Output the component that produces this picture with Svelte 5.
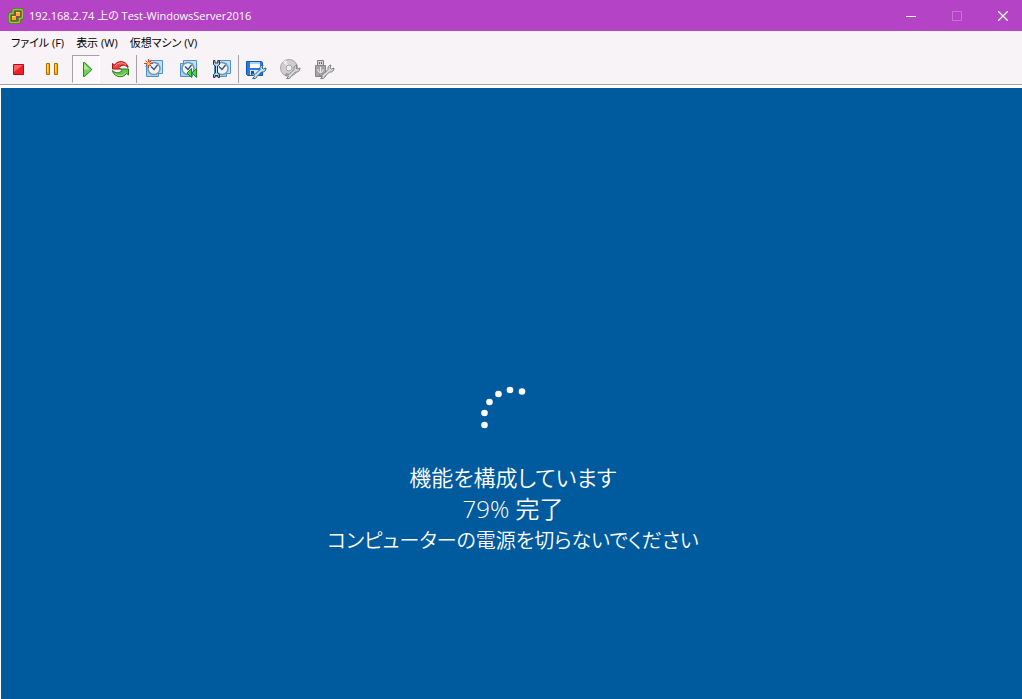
<script lang="ts">
  let progress = $state(79);

  const menus = ["ファイル (F)", "表示 (W)", "仮想マシン (V)"];

  const groups = [
    [
      { id: "stop", title: "電源オフ" },
      { id: "pause", title: "サスペンド" },
      { id: "play", title: "電源オン" },
      { id: "reset", title: "リセット" },
    ],
    [
      { id: "snapshot", title: "スナップショットの作成" },
      { id: "revert", title: "スナップショットに戻る" },
      { id: "manage", title: "スナップショットの管理" },
    ],
    [
      { id: "floppy", title: "フロッピーの接続" },
      { id: "cd", title: "CD/DVD の接続" },
      { id: "usb", title: "USB デバイスの接続" },
    ],
  ];

  const dots = [
    [3.5, 39],
    [3.5, 27],
    [8.5, 16],
    [17.5, 8],
    [29, 4],
    [41, 5.5],
  ];
</script>

{#snippet snapshotBase()}
  <path d="M6.500 2.500h13v13h-13z" fill="#c3e0f4" stroke="#4a93cf" />
  <path d="M3.500 5.500h12v13h-12z" fill="#a9d0ee" stroke="#4a93cf" />
  <circle cx="11" cy="10.500" r="6" fill="#eaf4fb" stroke="#7b93a8" stroke-width="1.500" />
  <path d="M8 8.500l3 3 3.500-4.500" fill="none" stroke="#36536f" stroke-width="1.300" />
{/snippet}

{#snippet wrench(fill: string, stroke: string)}
  <path
    d="M10 16.500l5-5c-.5-2.500.5-4 3-4.500l-1 3 1.500 1 2.500-1c0 3-2 4.500-4.500 4l-4.500 4.500c-.5 2-2.500 2.500-4.500 2l2-2-1-1.500-2 .5c0-2 1.500-2.500 3.500-1z"
    {fill}
    {stroke}
  />
{/snippet}

<div class="window">
  <header class="titlebar">
    <svg class="logo" width="16" height="16" viewBox="0 0 16 16" aria-hidden="true">
      <path d="M6.500 1.500H13q1.500 0 1.500 1.500v6q0 1.500-1.500 1.500h-1.500V13q0 1.500-1.500 1.500H3q-1.500 0-1.500-1.500V7q0-1.500 1.500-1.500h2V3q0-1.500 1.500-1.500z" fill="#8a4470" stroke="#4d7a1c" stroke-width="3" />
      <path d="M6.500 1.500H13q1.500 0 1.500 1.500v6q0 1.500-1.500 1.500h-1.500V13q0 1.500-1.500 1.500H3q-1.500 0-1.500-1.500V7q0-1.500 1.500-1.500h2V3q0-1.500 1.500-1.500z" fill="none" stroke="#8fc63a" stroke-width="1.500" />
      <path d="M8 4h4v4H8zM4 8h4v4H4z" fill="#ffad13" />
      <path d="M8 4h3v1H8zM4 8h3v1H4z" fill="#ffe24a" />
    </svg>
    <h1>192.168.2.74 上の Test-WindowsServer2016</h1>
    <div class="controls">
      <button title="最小化" aria-label="最小化">
        <svg width="10" height="10" viewBox="0 0 10 10"><path d="M0 5.500h10" /></svg>
      </button>
      <button title="最大化" aria-label="最大化" disabled>
        <svg width="10" height="10" viewBox="0 0 10 10"><path d="M.5.5h9v9h-9z" /></svg>
      </button>
      <button title="閉じる" aria-label="閉じる">
        <svg width="10" height="10" viewBox="0 0 10 10"><path d="M0 0l10 10M10 0L0 10" stroke-width="1.300" /></svg>
      </button>
    </div>
  </header>

  <nav class="menubar">
    {#each menus as menu}
      <button>{menu}</button>
    {/each}
  </nav>

  <div class="toolbar" role="toolbar">
    {#each groups as group}
      <div class="group">
        {#each group as tool}
          <button class:pressed={tool.id === "play"} title={tool.title} aria-label={tool.title}>
            <svg width="22" height="22" viewBox="0 0 22 22">
              {#if tool.id === "stop"}
                <path d="M6.500 6.500h10v10h-10z" fill="#ee2028" stroke="#b80c12" />
                <path d="M7 7h9L7 14z" fill="#ff6464" />
              {:else if tool.id === "pause"}
                <path d="M5.500 5.500h3v11h-3zM13.500 5.500h3v11h-3z" fill="#ffb400" stroke="#b86500" />
                <path d="M6 6h1v8H6zM14 6h1v8h-1z" fill="#ffe070" />
              {:else if tool.id === "play"}
                <path d="M8.500 4.500h1l7 6.500v1l-7 6.500h-1z" fill="#6fd452" stroke="#218719" />
                <path d="M9 6l5.500 5.500H9z" fill="#b2ec98" />
              {:else if tool.id === "reset"}
                <path d="M3.500 5.500l2 1.500c3.500-5 11-4.500 13.500 1.500v1c-3-3-6.500-3-9 0l1.500 1.500h-8z" fill="#ee4540" stroke="#a51316" />
                <path d="M6 8c3-4 8-4 11-1" fill="none" stroke="#ff9b91" />
                <path d="M19.500 17l-2-1.500c-3.500 5-11.500 4-14-2v-1c3 3 7 3 9.500 0L11.500 11h8z" fill="#65c84c" stroke="#28761f" />
                <path d="M17 14.500c-3 4-8 4-11 1" fill="none" stroke="#b5eb93" />
              {:else if tool.id === "snapshot"}
                {@render snapshotBase()}
                <path d="M5.500 1v9M1 5.500h9M2.500 2.500l6 6M8.500 2.500l-6 6" stroke="#e0401c" />
                <circle cx="5.500" cy="5.500" r="1.500" fill="#ffd24a" />
              {:else if tool.id === "revert"}
                {@render snapshotBase()}
                <path d="M14.500 10.500v9l-4.500-4.500zM19.500 10.500v9L15 15z" fill="#5fd046" stroke="#1f8a1c" />
              {:else if tool.id === "manage"}
                {@render snapshotBase()}
                <path d="M2.500 2.500v4l2 1.500v7l-2 1.500v3h1.500v-2h3v2h1.500v-3l-2-1.500V8l2-1.500v-4H7V5H4V2.500z" fill="#c4dceb" stroke="#25364b" />
              {:else if tool.id === "floppy"}
                <path d="M1.500 3.500h15l1 1v13h-15l-1-1z" fill="#257ce4" stroke="#1554ad" />
                <path d="M5 4h10v6H5z" fill="#fff" />
                <path d="M5 4h10v2H5z" fill="#a9d0f5" />
                <path d="M5 12h9v5H5z" fill="#d9e5ef" />
                <path d="M6 13h3v4H6z" fill="#244b85" />
                {@render wrench("#bde4f7", "#335f80")}
              {:else if tool.id === "cd"}
                <circle cx="10" cy="10" r="8.500" fill="#cfcfcf" stroke="#a5a5a5" />
                <path d="M10 10L4 4l3-2zM10 10l6 5-3 2z" fill="#ededed" />
                <circle cx="10" cy="10" r="3" fill="#eee" stroke="#a5a5a5" />
                {@render wrench("#d8d8d8", "#808080")}
              {:else if tool.id === "usb"}
                <path d="M4.500 2.500h6v5h-6z" fill="#d7d7d7" stroke="#808080" />
                <path d="M6 4h1v2H6zM8 4h1v2H8z" fill="#666" />
                <path d="M2.500 7.500h10v11h-10z" fill="#a5a5a5" stroke="#858585" />
                <path d="M7.500 9v8M5 11v2l2.500 2 2.500-2v-2" fill="none" stroke="#eee" />
                {@render wrench("#d8d8d8", "#808080")}
              {/if}
            </svg>
          </button>
        {/each}
      </div>
    {/each}
  </div>

  <main class="screen">
    <svg class="spinner" width="64" height="64" viewBox="0 0 64 64" aria-hidden="true">
      {#each dots as [cx, cy]}
        <circle {cx} {cy} r="3.300" fill="#fff" />
      {/each}
    </svg>
    <p>機能を構成しています</p>
    <p class="progress">{progress}% 完了</p>
    <p class="warning">コンピューターの電源を切らないでください</p>
  </main>
</div>

<style>
  :global(body) {
    margin: 0;
  }
  .window {
    display: flex;
    flex-direction: column;
    min-height: 100vh;
    background: #f7f3f7;
    color: #000;
    font-family: "Open Sans", "Noto Sans CJK JP", sans-serif;
    font-size: 11px;
    font-feature-settings: "palt";
  }
  button {
    padding: 0;
    border: none;
    background: none;
    color: inherit;
    font: inherit;
    font-feature-settings: inherit;
  }
  svg {
    display: block;
  }
  .titlebar {
    display: flex;
    align-items: center;
    height: 31px;
    padding-left: 8px;
    background: #b543c6;
    color: #fff;
  }
  .logo {
    overflow: visible;
  }
  h1 {
    margin: 0 0 0 5px;
    font-size: 11px;
    font-weight: 400;
    line-height: 16px;
    white-space: nowrap;
  }
  .controls {
    display: flex;
    gap: 8px;
    height: 100%;
    margin-left: auto;
  }
  .controls button {
    display: grid;
    place-items: center;
    width: 38px;
  }
  .controls path {
    fill: none;
    stroke: #fff;
  }
  .controls button:disabled {
    opacity: 0.25;
  }
  .menubar {
    display: flex;
    align-items: center;
    gap: 12px;
    height: 24px;
    padding-left: 11px;
  }
  .menubar button {
    line-height: 16px;
    white-space: nowrap;
  }
  .toolbar {
    display: flex;
    height: 29px;
    padding-left: 4px;
    border-bottom: 1px solid #a5a0a5;
  }
  .group {
    display: flex;
    gap: 6px;
    height: 28px;
  }
  .group + .group {
    margin-left: 2px;
    padding-left: 3px;
    border-left: 1px solid #a5a0a5;
  }
  .group button {
    display: grid;
    place-items: center;
    box-sizing: border-box;
    width: 28px;
    height: 28px;
    border: 1px solid transparent;
  }
  .group button.pressed {
    border-color: #a5a0a5 #fff #fff #a5a0a5;
    background: #faf8fa;
  }
  .screen {
    display: flex;
    flex: 1;
    flex-direction: column;
    align-items: center;
    padding: 298px 0 32px 3px;
    border-top: 3px solid #fff;
    border-left: 1px solid #fff;
    background: #005a9e;
    color: #fff;
    font-size: 22px;
    font-weight: 350;
    line-height: 32px;
  }
  .spinner {
    margin-bottom: 11px;
  }
  p {
    margin: 0;
    text-align: center;
  }
  .progress {
    font-size: 24px;
  }
  .warning {
    font-size: 20px;
  }
</style>
